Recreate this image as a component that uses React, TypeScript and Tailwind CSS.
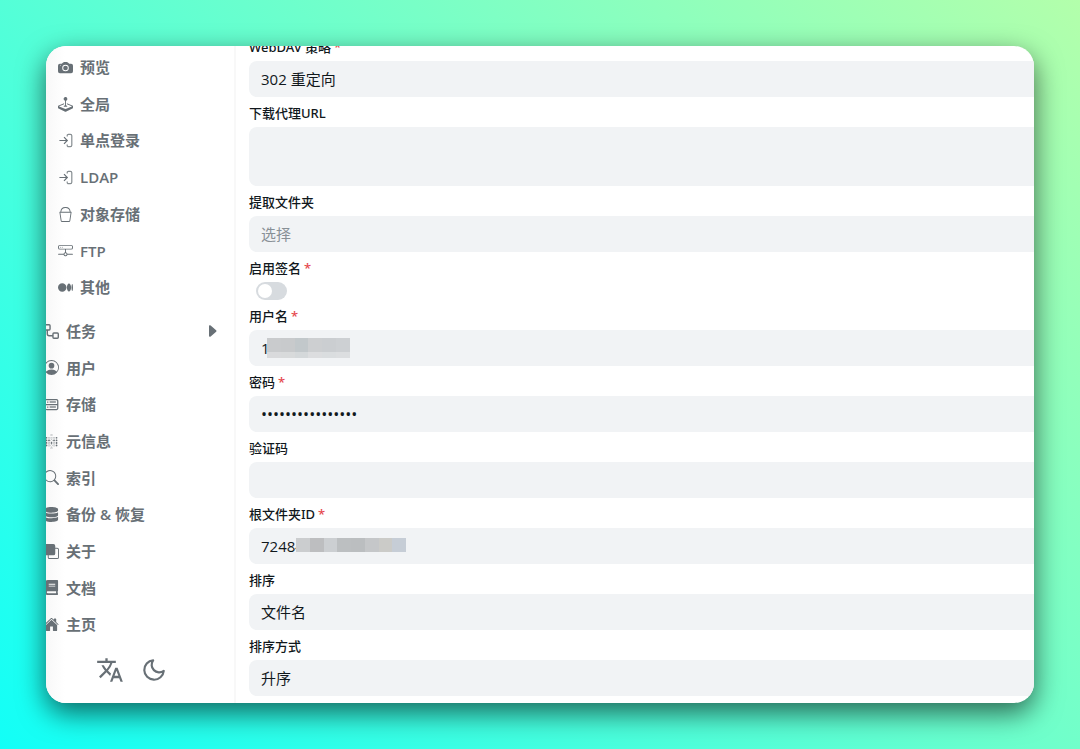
import { useState } from "react";
import type { ComponentType, ReactNode } from "react";
import {
  BsBucket,
  BsCameraFill,
  BsCaretRightFill,
  BsFront,
  BsHddNetwork,
  BsJoystick,
  BsMedium,
  BsPersonCircle,
  BsSearch,
} from "react-icons/bs";
import { CgDatabase } from "react-icons/cg";
import { FaBook, FaDatabase } from "react-icons/fa";
import { FiMoon } from "react-icons/fi";
import { IoHome } from "react-icons/io5";
import { MdTranslate } from "react-icons/md";
import { SiMetabase } from "react-icons/si";

type IconProps = { className?: string };

type MenuItem = {
  title: string;
  icon: ComponentType<IconProps>;
  expandable?: boolean;
};

function LoginIcon({ className }: IconProps) {
  return (
    <svg
      viewBox="0 0 15 15"
      fill="none"
      stroke="currentColor"
      strokeWidth="1.2"
      className={className}
    >
      <path
        d="M9.2 3.4V2.6a1.2 1.2 0 0 1 1.2-1.2h2a1.4 1.4 0 0 1 1.4 1.4v9.4a1.4 1.4 0 0 1-1.4 1.4h-2a1.2 1.2 0 0 1-1.2-1.2v-.8"
        opacity="0.8"
      />
      <path d="M1.4 7.5h7.8M6 4.2l3.3 3.3L6 10.8" />
    </svg>
  );
}

function WorkflowIcon({ className }: IconProps) {
  return (
    <svg
      viewBox="0 0 16 16"
      fill="none"
      stroke="currentColor"
      strokeWidth="1.5"
      className={className}
    >
      <rect x="0.75" y="0.75" width="5.7" height="5.7" rx="1" />
      <rect x="9.55" y="9.55" width="5.7" height="5.7" rx="1" />
      <path d="M3.5 6.5v4a2 2 0 0 0 2 2h4" />
    </svg>
  );
}

const settingItems: MenuItem[] = [
  { title: "预览", icon: BsCameraFill },
  { title: "全局", icon: BsJoystick },
  { title: "单点登录", icon: LoginIcon },
  { title: "LDAP", icon: LoginIcon },
  { title: "对象存储", icon: BsBucket },
  { title: "FTP", icon: BsHddNetwork },
  { title: "其他", icon: BsMedium },
];

const mainItems: MenuItem[] = [
  { title: "任务", icon: WorkflowIcon, expandable: true },
  { title: "用户", icon: BsPersonCircle },
  { title: "存储", icon: CgDatabase },
  { title: "元信息", icon: SiMetabase },
  { title: "索引", icon: BsSearch },
  { title: "备份 & 恢复", icon: FaDatabase },
  { title: "关于", icon: BsFront },
  { title: "文档", icon: FaBook },
  { title: "主页", icon: IoHome },
];

const usernameMask = [
  "bg-[#c9cbcd]",
  "bg-[#c8cacc]",
  "bg-[#c2c8cb]",
  "bg-[#cdcfd1]",
  "bg-[#cbced1]",
  "bg-[#cdd0d3]",
];

const rootMask = [
  "bg-[#cbcdcf]",
  "bg-[#bdbec0]",
  "bg-[#cccfd2]",
  "bg-[#bcbfc1]",
  "bg-[#bbbec0]",
  "bg-[#c5c7c9]",
  "bg-[#cbcbc8]",
  "bg-[#c6cdd6]",
];

const control =
  "block h-9 w-full appearance-none rounded-l-lg bg-[#f1f3f5] px-3 text-[15px] text-[#11181c] outline-none";

function MenuLink({ item }: { item: MenuItem }) {
  const Icon = item.icon;
  return (
    <li className="flex flex-1">
      <a href="#" className="flex flex-1 items-center gap-[7px] pr-3.5">
        <Icon className="size-[15px] shrink-0" />
        <span className="flex-1">{item.title}</span>
        {item.expandable && <BsCaretRightFill className="size-4" />}
      </a>
    </li>
  );
}

function Field({
  id,
  label,
  required,
  children,
}: {
  id: string;
  label: string;
  required?: boolean;
  children: ReactNode;
}) {
  return (
    <div className="flex flex-col gap-1">
      <label
        htmlFor={id}
        className="font-['Noto_Sans','Noto_Sans_CJK_SC',sans-serif] text-[13px] leading-5 font-medium text-[#11181c]"
      >
        {label}
        {required && <span className="ml-[3px] text-[#e5484d]">*</span>}
      </label>
      {children}
    </div>
  );
}

export default function App() {
  const [enableSign, setEnableSign] = useState(false);
  const [username, setUsername] = useState("1");
  const [password, setPassword] = useState("abcdefghijklmnop");
  const [rootId, setRootId] = useState("72484");

  return (
    <div className="flex min-h-screen flex-col bg-[linear-gradient(45deg,#12fff7,#b3ffab)] p-[46px] font-['Open_Sans','Noto_Sans_CJK_SC',sans-serif]">
      <div className="flex flex-1 overflow-hidden rounded-[20px] bg-white shadow-[0_10px_28px_rgba(0,0,0,0.6)]">
        {/* Side menu */}
        <aside className="flex w-[190px] shrink-0 flex-col border-r-2 border-[#f8f8f8] bg-linear-to-r from-[#f8f8f8] to-white to-10% text-[#687076]">
          <nav className="-ml-0.5 flex flex-1 flex-col gap-[7px] pt-[3px] text-[15px] font-semibold">
            <ul className="flex flex-7 flex-col pl-3.5">
              {settingItems.map((item) => (
                <MenuLink key={item.title} item={item} />
              ))}
            </ul>
            <ul className="flex flex-9 flex-col">
              {mainItems.map((item) => (
                <MenuLink key={item.title} item={item} />
              ))}
            </ul>
          </nav>
          <div className="flex h-[60px] items-center justify-center gap-[17px] pr-[18px] pb-1.5">
            <button type="button" aria-label="切换语言">
              <MdTranslate className="size-7" />
            </button>
            <button type="button" aria-label="切换主题">
              <FiMoon className="size-[26px]" />
            </button>
          </div>
        </aside>

        {/* Storage form */}
        <form className="-mt-[9px] flex min-w-0 flex-1 flex-col gap-1.5 pb-[7px] pl-[13px]">
          <Field id="webdav_policy" label="WebDAV 策略" required>
            <select id="webdav_policy" className={control}>
              <option>302 重定向</option>
              <option>本地代理</option>
            </select>
          </Field>
          <Field id="down_proxy_url" label="下载代理URL">
            <textarea
              id="down_proxy_url"
              className="block h-[59px] w-full resize-none rounded-l-lg bg-[#f1f3f5] px-3 py-2 text-[15px] text-[#11181c] outline-none"
            />
          </Field>
          <Field id="extract_folder" label="提取文件夹">
            <select
              id="extract_folder"
              className="block h-9 w-full appearance-none rounded-l-lg bg-[#f1f3f5] px-3 text-[15px] text-[#889096] outline-none"
            >
              <option>选择</option>
              <option>提取到最前</option>
              <option>提取到最后</option>
            </select>
          </Field>
          <Field id="enable_sign" label="启用签名" required>
            <input
              id="enable_sign"
              type="checkbox"
              role="switch"
              checked={enableSign}
              onChange={(e) => setEnableSign(e.target.checked)}
              className="ml-[7px] flex h-[18px] w-[31px] appearance-none items-center rounded-full bg-[#d7dbdf] px-0.5 before:size-3.5 before:rounded-full before:bg-white checked:justify-end checked:bg-[#1890ff]"
            />
          </Field>
          <Field id="username" label="用户名" required>
            <div className="relative">
              <input
                id="username"
                type="text"
                value={username}
                onChange={(e) => setUsername(e.target.value)}
                className={control}
              />
              <div className="absolute top-2 left-[18px] flex w-[83px]">
                {usernameMask.map((color, i) => (
                  <div key={i} className={`h-5 flex-1 ${color}`}>
                    <div className="mt-3.5 h-1.5 bg-white/30" />
                  </div>
                ))}
              </div>
            </div>
          </Field>
          <Field id="password" label="密码" required>
            <input
              id="password"
              type="password"
              value={password}
              onChange={(e) => setPassword(e.target.value)}
              className="block h-9 w-full appearance-none rounded-l-lg bg-[#f1f3f5] px-3 text-base text-[#11181c] outline-none"
            />
          </Field>
          <Field id="validate_code" label="验证码">
            <input id="validate_code" type="text" className={control} />
          </Field>
          <Field id="root_folder_id" label="根文件夹ID" required>
            <div className="relative">
              <input
                id="root_folder_id"
                type="text"
                value={rootId}
                onChange={(e) => setRootId(e.target.value)}
                className={control}
              />
              <div className="absolute top-2.5 left-[47px] flex w-[110px]">
                {rootMask.map((color, i) => (
                  <div key={i} className={`h-3.5 flex-1 ${color}`} />
                ))}
              </div>
            </div>
          </Field>
          <Field id="order_by" label="排序">
            <select id="order_by" className={control}>
              <option>文件名</option>
              <option>文件大小</option>
              <option>修改时间</option>
            </select>
          </Field>
          <Field id="order_direction" label="排序方式">
            <select id="order_direction" className={control}>
              <option>升序</option>
              <option>降序</option>
            </select>
          </Field>
        </form>
      </div>
    </div>
  );
}
